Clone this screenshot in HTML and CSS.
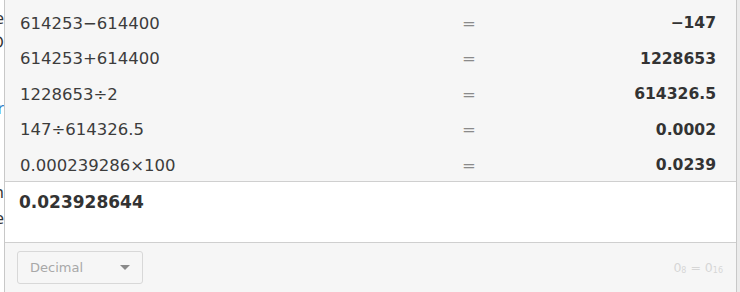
FILE: index.html
```html
<!DOCTYPE html>
<html>
<head>
<meta charset="utf-8">
<link rel="stylesheet" href="styles.css">
</head>
<body>
<div class="screen">
  <div class="behind">
    <div class="frag f1"><span>the</span></div>
    <div class="frag f2"><span>OD</span></div>
    <div class="frag f3 link"><span>or</span></div>
    <div class="frag f4"><span>en</span></div>
    <div class="frag f5"><span>he</span></div>
  </div>
  <div class="panel">
    <div class="history">
      <div class="row"><span class="expr">614253−614400</span><span class="eq">=</span><span class="res">−147</span></div>
      <div class="row"><span class="expr">614253+614400</span><span class="eq">=</span><span class="res">1228653</span></div>
      <div class="row"><span class="expr">1228653÷2</span><span class="eq">=</span><span class="res">614326.5</span></div>
      <div class="row"><span class="expr">147÷614326.5</span><span class="eq">=</span><span class="res">0.0002</span></div>
      <div class="row"><span class="expr">0.000239286×100</span><span class="eq">=</span><span class="res">0.0239</span></div>
    </div>
    <div class="entry">0.023928644</div>
    <div class="bar">
      <div class="select">
        <span>Decimal</span>
        <svg class="arrow" width="10" height="6" viewBox="0 0 10 6"><path d="M0 0 L10 0 L5 5 Z" fill="#8a8a8a"/></svg>
      </div>
      <div class="base">0<sub>8</sub> = 0<sub>16</sub></div>
    </div>
  </div>
  <div class="edge"></div>
</div>
</body>
</html>
```
FILE: styles.css
```css
html, body {
  margin: 0;
  padding: 0;
  width: 740px;
  height: 292px;
  overflow: hidden;
  background: #ffffff;
}
.screen {
  display: flex;
  width: 740px;
  height: 292px;
  font-family: "DejaVu Sans", "Noto Sans", sans-serif;
  color: #333333;
}
.behind {
  width: 4px;
  flex: none;
  background: #ffffff;
  overflow: hidden;
  font-size: 16px;
  font-family: "Noto Sans", sans-serif;
  color: #333;
  display: flex;
  flex-direction: column;
}
.frag {
  display: flex;
  justify-content: flex-end;
  height: 20px;
  line-height: 20px;
  white-space: nowrap;
}
.frag.link { color: #2a7cc7; }
.f1 { margin-top: 8px; }
.f2 { margin-top: 4px; }
.f3 { margin-top: 46px; }
.f4 { margin-top: 64px; }
.f5 { margin-top: 6px; }
.panel {
  flex: none;
  width: 731px;
  border-left: 1px solid #c8c8c8;
  border-right: 1px solid #c8c8c8;
  display: flex;
  flex-direction: column;
}
.edge {
  flex: 1;
  background: #ebebeb;
}
.history {
  background: #f6f6f6;
  height: 182px;
  box-sizing: border-box;
  padding: 5.5px 20px 0 15px;
  border-bottom: 1px solid #cfcfcf;
  font-size: 16.5px;
}
.row {
  display: grid;
  grid-template-columns: 1fr 20px 237px;
  height: 35.5px;
  align-items: center;
}
.expr { color: #3c3c3c; }
.eq { color: #8a8a8a; text-align: center; }
.res { font-weight: 700; text-align: right; color: #333; font-size: 15.6px; }
.entry {
  background: #ffffff;
  height: 61px;
  box-sizing: border-box;
  padding: 10px 13px 0 14px;
  font-size: 17px;
  font-weight: 700;
  color: #333;
  border-bottom: 1px solid #cfcfcf;
}
.bar {
  flex: 1;
  background: #f6f6f6;
  display: flex;
  align-items: center;
  justify-content: space-between;
  padding: 0 13px 0 12px;
}
.select {
  width: 126px;
  height: 33px;
  box-sizing: border-box;
  border: 1px solid #d8d8d8;
  border-radius: 3px;
  display: flex;
  align-items: center;
  justify-content: space-between;
  padding: 0 12px 0 12px;
  font-size: 13px;
  color: #a8a8a8;
}
.base {
  font-size: 12.5px;
  color: #d6d6d6;
}
.base sub { font-size: 8px; vertical-align: -1px; }
```
